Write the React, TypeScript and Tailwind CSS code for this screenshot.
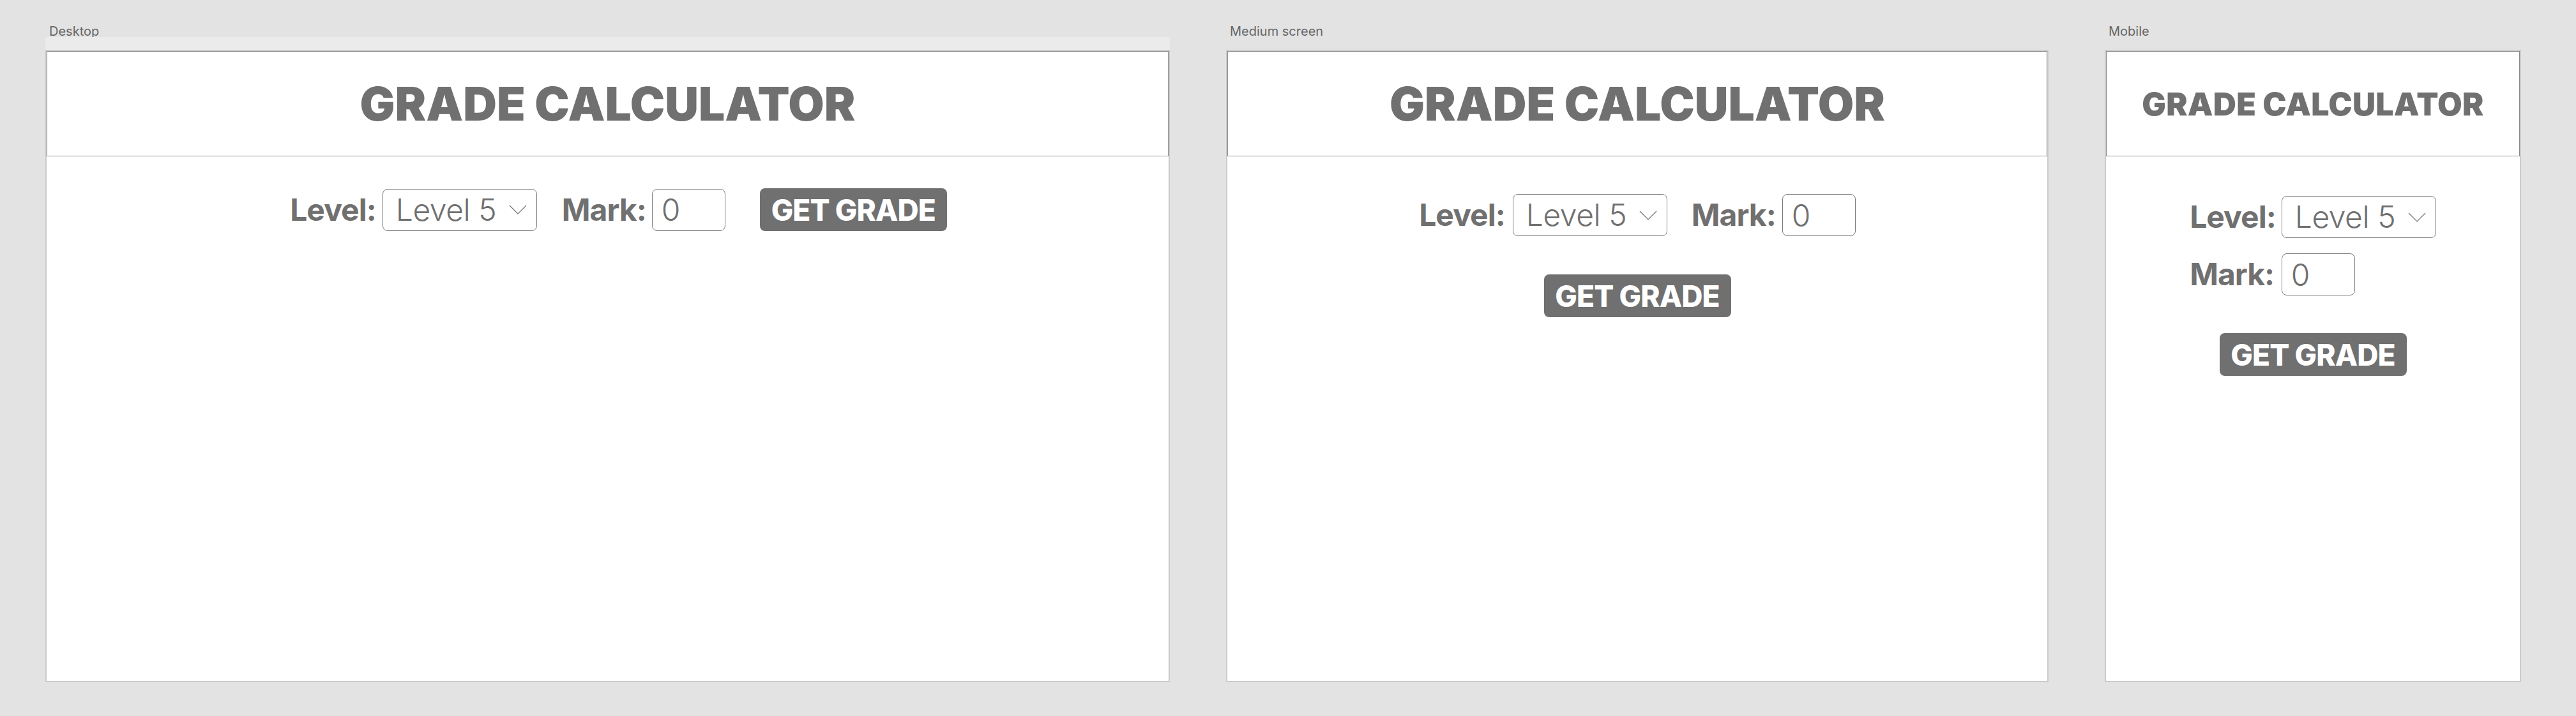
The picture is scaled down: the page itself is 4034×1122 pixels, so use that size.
import React from 'react';

const font = { fontFamily: 'Inter, "Noto Sans", "Liberation Sans", sans-serif' };

const Chevron: React.FC = () => (
  <svg width="28" height="15" viewBox="0 0 28 15" fill="none" className="shrink-0">
    <path d="M1 1l13 13L27 1" stroke="#707070" strokeWidth="1.2" />
  </svg>
);

const LevelSelect: React.FC = () => (
  <div className="flex items-center justify-between w-[242px] h-[66px] border border-[#7a7a7a] rounded-[8px] pl-[20px] pr-[15px] bg-white">
    <span className="text-[48px] font-light leading-none text-[#707070] tracking-[-0.01em]">Level 5</span>
    <Chevron />
  </div>
);

const MarkInput: React.FC = () => (
  <input
    readOnly
    value="0"
    className="w-[115px] h-[66px] border border-[#7a7a7a] rounded-[8px] pl-[14px] text-[48px] font-light leading-none text-[#707070] bg-white outline-none"
    style={font}
  />
);

const Label: React.FC<{ children: React.ReactNode }> = ({ children }) => (
  <span className="text-[48px] font-bold leading-none text-[#707070] tracking-[-0.02em]">{children}</span>
);

const GradeButton: React.FC = () => (
  <button className="w-[293px] h-[67px] bg-[#707070] rounded-[8px] text-white text-[46px] font-extrabold leading-none tracking-[-0.02em]">
    GET GRADE
  </button>
);

const Header: React.FC<{ small?: boolean }> = ({ small }) => (
  <div className="h-[165px] border border-[#8a8a8a] flex items-center justify-center">
    <h1
      className={
        small
          ? 'text-[50px] font-black text-[#707070] tracking-[0.005em] leading-none'
          : 'text-[73px] font-black text-[#707070] tracking-[0em] leading-none'
      }
    >
      GRADE CALCULATOR
    </h1>
  </div>
);

const Artboard: React.FC<{ title: string; width: string; strip?: boolean; children: React.ReactNode }> = ({
  title,
  width,
  strip,
  children,
}) => (
  <div className={`flex flex-col ${width}`}>
    <div className="h-[39px]" />
    <div className="h-[19px] text-[20px] leading-[20px] text-[#666666] pl-[6px]">{title}</div>
    <div className={strip ? 'h-[20px] bg-[#ebebeb]' : 'h-[20px]'} />
    <div className="h-[991px] border-2 border-[#cbcbcb] bg-white flex flex-col">{children}</div>
  </div>
);

export default function App() {
  return (
    <div className="w-[4034px] h-[1122px] bg-[#e3e3e3] flex pl-[71px] gap-[88px]" style={font}>
      {/* Desktop */}
      <Artboard title="Desktop" width="w-[1761px]" strip>
        <Header />
        <div className="flex items-center justify-center pt-[50px] pl-[34px]">
          <Label>Level:</Label>
          <div className="ml-[10px]">
            <LevelSelect />
          </div>
          <div className="ml-[39px]">
            <Label>Mark:</Label>
          </div>
          <div className="ml-[9px]">
            <MarkInput />
          </div>
          <div className="ml-[54px]">
            <GradeButton />
          </div>
        </div>
      </Artboard>

      {/* Medium screen */}
      <Artboard title="Medium screen" width="w-[1288px]">
        <Header />
        <div className="flex flex-col items-center pt-[59px] gap-[60px]">
          <div className="flex items-center">
            <Label>Level:</Label>
            <div className="ml-[12px]">
              <LevelSelect />
            </div>
            <div className="ml-[38px]">
              <Label>Mark:</Label>
            </div>
            <div className="ml-[10px]">
              <MarkInput />
            </div>
          </div>
          <GradeButton />
        </div>
      </Artboard>

      {/* Mobile */}
      <Artboard title="Mobile" width="w-[652px]">
        <Header small />
        <div className="flex flex-col items-center pt-[62px]">
          <div className="grid grid-cols-[auto_auto] gap-x-[9px] gap-y-[24px] items-center">
            <Label>Level:</Label>
            <LevelSelect />
            <Label>Mark:</Label>
            <MarkInput />
          </div>
          <div className="mt-[59px]">
            <GradeButton />
          </div>
        </div>
      </Artboard>
    </div>
  );
}
